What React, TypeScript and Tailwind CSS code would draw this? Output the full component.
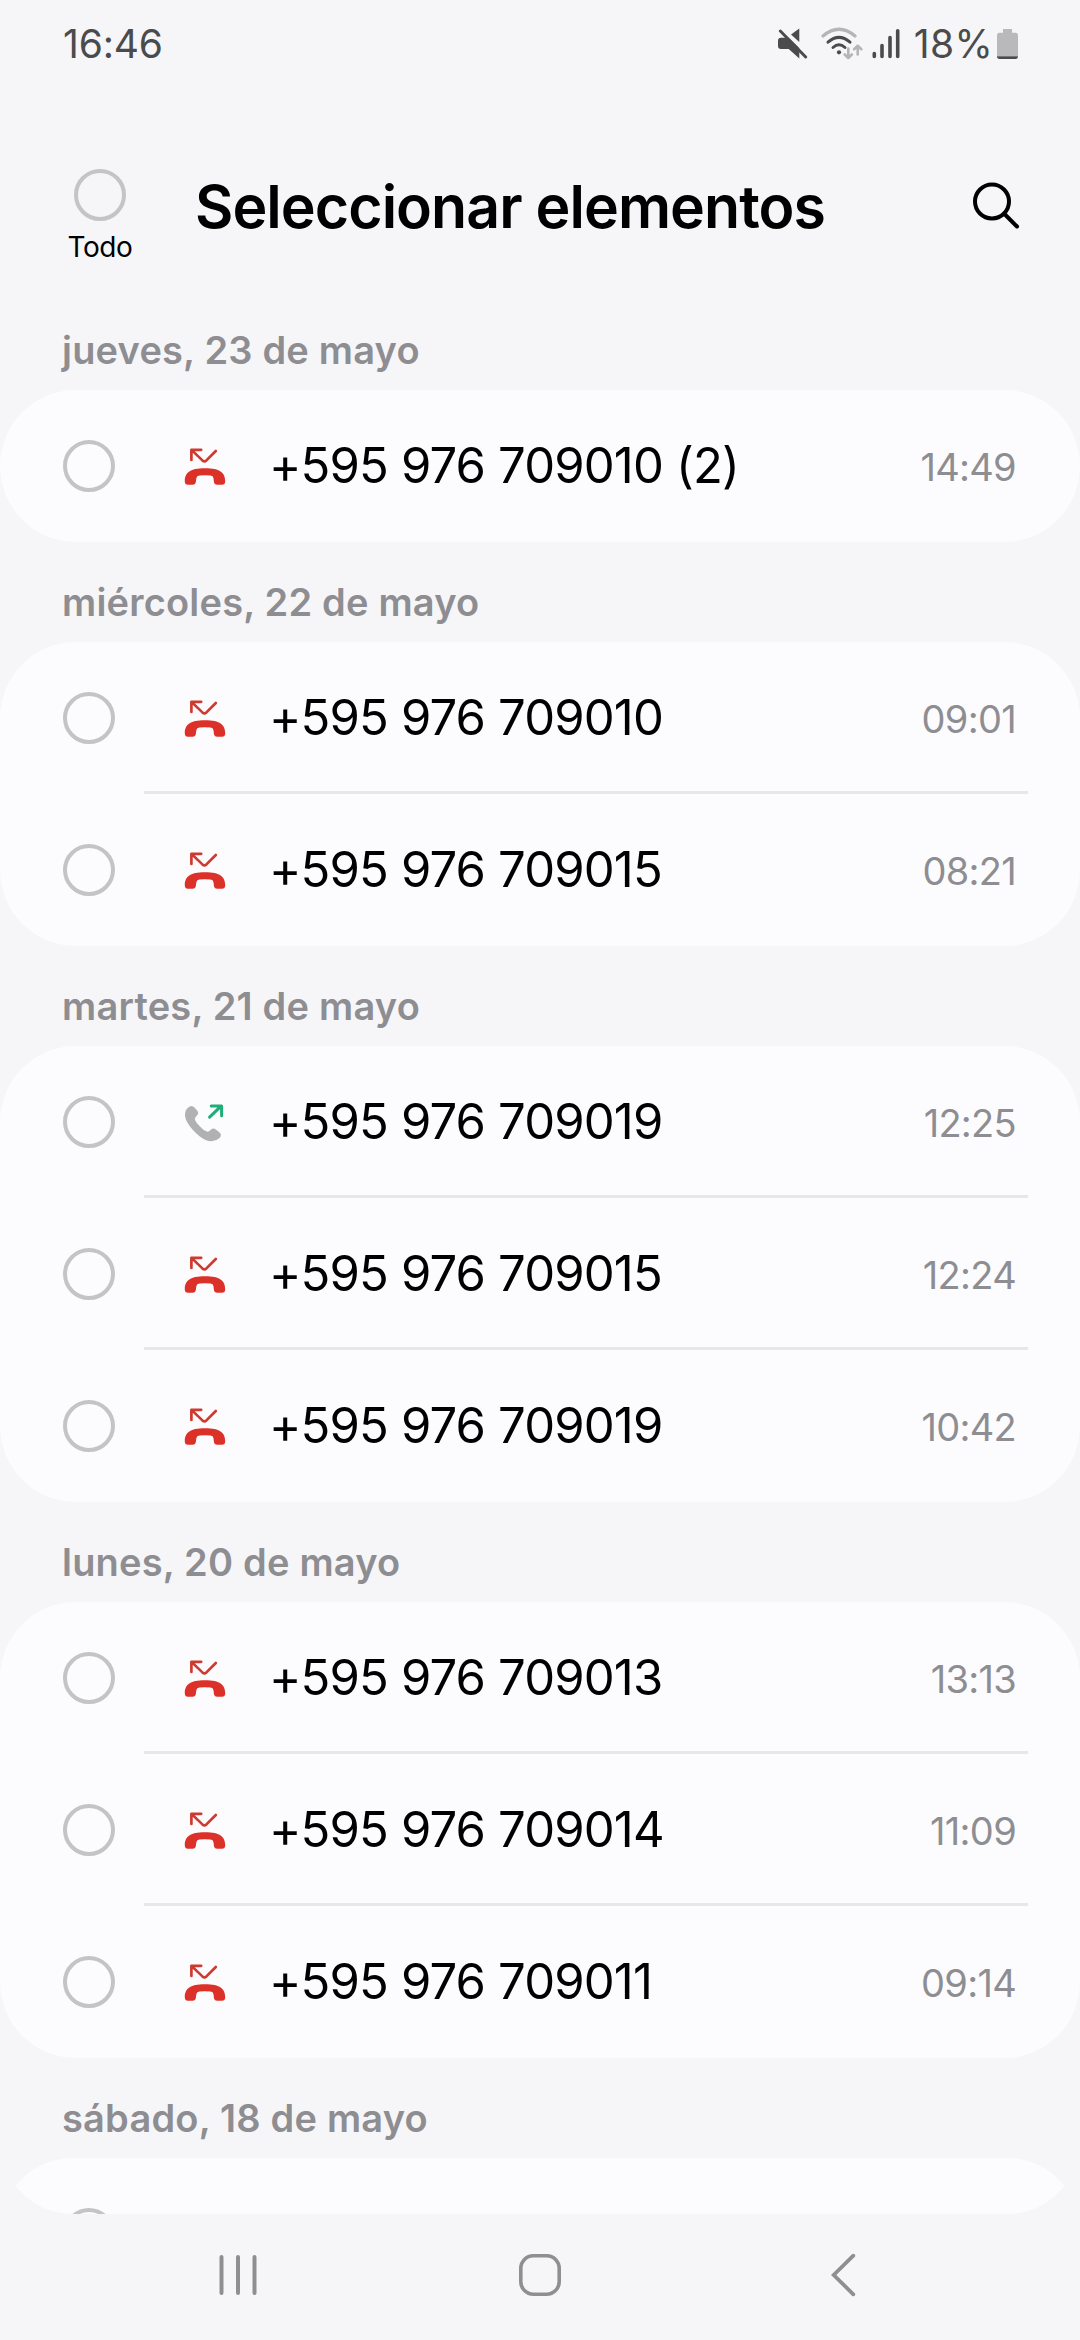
type CallType = "missed" | "outgoing";

interface Call {
  number: string;
  time: string;
  type: CallType;
}

interface Day {
  label: string;
  calls: Call[];
}

const DAYS: Day[] = [
  {
    label: "jueves, 23 de mayo",
    calls: [{ number: "+595 976 709010 (2)", time: "14:49", type: "missed" }],
  },
  {
    label: "miércoles, 22 de mayo",
    calls: [
      { number: "+595 976 709010", time: "09:01", type: "missed" },
      { number: "+595 976 709015", time: "08:21", type: "missed" },
    ],
  },
  {
    label: "martes, 21 de mayo",
    calls: [
      { number: "+595 976 709019", time: "12:25", type: "outgoing" },
      { number: "+595 976 709015", time: "12:24", type: "missed" },
      { number: "+595 976 709019", time: "10:42", type: "missed" },
    ],
  },
  {
    label: "lunes, 20 de mayo",
    calls: [
      { number: "+595 976 709013", time: "13:13", type: "missed" },
      { number: "+595 976 709014", time: "11:09", type: "missed" },
      { number: "+595 976 709011", time: "09:14", type: "missed" },
    ],
  },
];

function MissedIcon() {
  return (
    <svg className="h-[40px] w-[42px]" viewBox="0 0 42 40" fill="none">
      <path
        d="M7.4 14V3.8H17.2M8 4.4L18.4 14.4Q20.4 16.2 22.4 14.4L31.8 5"
        stroke="#cf3a30"
        strokeWidth="2.7"
        strokeLinecap="round"
        strokeLinejoin="round"
      />
      <path
        d="M.8 35.2C.8 27 5.500 22.300 21 22.300S41.200 27 41.200 35.200Q41.200 38.700 38 38.700H33.200Q30.300 38.700 29.900 35.700L29.500 32.200Q29.200 29.700 26.500 29.400Q21 28.900 15.500 29.400Q12.700 29.700 12.300 32.200L11.900 35.700Q11.500 38.700 8.500 38.700H4Q.8 38.700 .8 35.200Z"
        fill="#dc3128"
      />
    </svg>
  );
}

function OutgoingIcon() {
  return (
    <svg className="h-[40px] w-[42px]" viewBox="0 0 42 40" fill="none">
      <path
        d="M4.2 5.4Q7.5 2.400 10.500 5.400L13.300 8.800Q15.300 11.500 12.800 13.700Q10.500 15.500 11 17.700Q11.700 20.200 16 24.500T23 29.500Q25 30.200 27 27.600Q29.300 25.500 31.800 27.400L35.600 30.500Q38.300 33 35.500 36Q30 41.200 21.500 37.900Q15.500 35.200 8.500 27.400T1 13.700Q.7 8.500 4.200 5.400Z"
        fill="#b0b1b3"
      />
      <path
        d="M25.600 15.200L36.800 4.400M27.200 3.900H37.600V13.700"
        stroke="#1fae78"
        strokeWidth="3"
        strokeLinecap="round"
        strokeLinejoin="round"
      />
    </svg>
  );
}

function Radio() {
  return (
    <span className="block size-[52px] shrink-0 rounded-full border-4 border-[#c4c4c6]" />
  );
}

function CallRow({ call, last }: { call: Call; last: boolean }) {
  return (
    <li className="relative flex h-[152px] items-center pr-[64px] pl-[63px]">
      <Radio />
      <span className="ml-[69px]">
        {call.type === "missed" ? <MissedIcon /> : <OutgoingIcon />}
      </span>
      <span className="ml-[43px] text-[49px] tracking-[-0.85px] text-black">
        {call.number}
      </span>
      <span className="ml-auto pt-[2px] text-[38px] tracking-[-0.7px] text-[#8e8e92]">
        {call.time}
      </span>
      {!last && (
        <span className="absolute right-[52px] bottom-0 left-[144px] h-[3px] bg-[#e6e7e7]" />
      )}
    </li>
  );
}

function DayLabel({ children }: { children: string }) {
  return (
    <h2 className="flex h-[100px] items-center pt-[20px] pl-[62px] text-[38px] leading-[50px] font-semibold tracking-[0.2px] text-[#8e8e92]">
      {children}
    </h2>
  );
}

function StatusBar() {
  return (
    <div className="flex h-[88px] shrink-0 items-center pr-[62px] pl-[63px] text-[#4b4b4b]">
      <span className="text-[39px] tracking-[-0.2px]">16:46</span>
      <svg className="ml-auto h-[34px] w-[130px]" viewBox="0 0 130 34" fill="none">
        <path d="M22.3 1.500V15L14 7.500ZM4 10.700H11.700L22.300 21V31.500L11.700 22H4Q1 22 1 19V13.700Q1 10.700 4 10.700Z" fill="#4b4b4b" />
        <path d="M6.500 3L31 27.500" stroke="#f6f6f9" strokeWidth="3" />
        <path d="M3.300 4L28.700 30" stroke="#4b4b4b" strokeWidth="3" strokeLinecap="round" />
        <g strokeLinecap="round" strokeLinejoin="round">
          <path d="M46 9Q62 -4.500 78 9" stroke="#b5b5b7" strokeWidth="3.2" />
          <path d="M51 15.200Q62 5.500 73 15.200" stroke="#4b4b4b" strokeWidth="3" />
          <path d="M56 20.500Q62 15 68 20.500" stroke="#4b4b4b" strokeWidth="3" />
          <circle cx="62" cy="25.300" r="2.100" fill="#4b4b4b" />
          <path d="M71.300 21.500V30.500M67.700 27.500L71.300 31L74.900 27.500M80.700 27.500V18.800M77.100 22.300L80.700 18.800L84.300 22.300" stroke="#b5b5b7" strokeWidth="2.6" />
          <path d="M97.300 26.500V29.500M105 18.500V29.500M113 10.500V29.500M120.700 3.800V29.500" stroke="#4b4b4b" strokeWidth="3.6" />
        </g>
      </svg>
      <span className="ml-[7px] text-[39px] tracking-[0.3px]">18%</span>
      <svg className="ml-[4px] h-[32px] w-[21px]" viewBox="0 0 21 32">
        <path d="M6 1H15V4.800H18.500Q21 4.800 21 7.300V28H0V7.300Q0 4.800 2.500 4.800H6Z" fill="#b9b9bb" />
        <path d="M0 28.300H21Q21 31 18.500 31H2.500Q0 31 0 28.300Z" fill="#4b4b4b" />
      </svg>
    </div>
  );
}

export default function App() {
  return (
    <main className="flex h-[2340px] w-[1080px] flex-col overflow-hidden bg-[#f6f6f9] font-['Inter',sans-serif]">
      <StatusBar />

      <header className="flex h-[202px] shrink-0 items-start pt-[81px]">
        <div className="ml-[60px] flex w-[80px] flex-col items-center">
          <Radio />
          <span className="mt-[8px] text-[28px] leading-[36px] tracking-[-0.4px] text-black">
            Todo
          </span>
        </div>
        <h1 className="ml-[55px] text-[59px] leading-[76px] font-semibold tracking-[-0.95px] text-black">
          Seleccionar elementos
        </h1>
        <svg className="mt-[12px] mr-[60px] ml-auto size-[48px]" viewBox="0 0 48 48" fill="none">
          <circle cx="20" cy="20.500" r="17" stroke="#000" strokeWidth="4" />
          <path d="M32.500 33L45 45.500" stroke="#000" strokeWidth="4" strokeLinecap="round" />
        </svg>
      </header>

      {DAYS.map((day) => (
        <section key={day.label} className="shrink-0">
          <DayLabel>{day.label}</DayLabel>
          <ul className="rounded-[76px] bg-[#fcfcfe]">
            {day.calls.map((call, i) => (
              <CallRow key={call.time} call={call} last={i === day.calls.length - 1} />
            ))}
          </ul>
        </section>
      ))}

      <section className="shrink-0">
        <DayLabel>sábado, 18 de mayo</DayLabel>
        {/* the list viewport ends in rounded corners, which cut the last card */}
        <div className="-mt-[96px] h-[152px] overflow-hidden rounded-b-[73px] pt-[96px]">
          <div className="h-[152px] rounded-t-[73px] bg-[#fcfcfe] pt-[50px] pl-[63px]">
            <Radio />
          </div>
        </div>
      </section>

      <nav className="flex h-[126px] shrink-0 items-center pb-[4px] text-[#8f8f8f]">
        <svg className="ml-[219px] h-[42px] w-[38px]" viewBox="0 0 38 42" fill="none" stroke="currentColor" strokeWidth="4" strokeLinecap="round">
          <path d="M2.500 3V39M19 3V39M35.500 3V39" />
        </svg>
        <svg className="ml-[262px] size-[42px]" viewBox="0 0 42 42" fill="none" stroke="currentColor" strokeWidth="3.6">
          <rect x="1.800" y="1.800" width="38.400" height="38.400" rx="12.500" />
        </svg>
        <svg className="ml-[270px] h-[44px] w-[26px]" viewBox="0 0 26 44" fill="none" stroke="currentColor" strokeWidth="3.8" strokeLinecap="round">
          <path d="M22.300 2.700L2.700 22L22.300 41.300" />
        </svg>
      </nav>
    </main>
  );
}
